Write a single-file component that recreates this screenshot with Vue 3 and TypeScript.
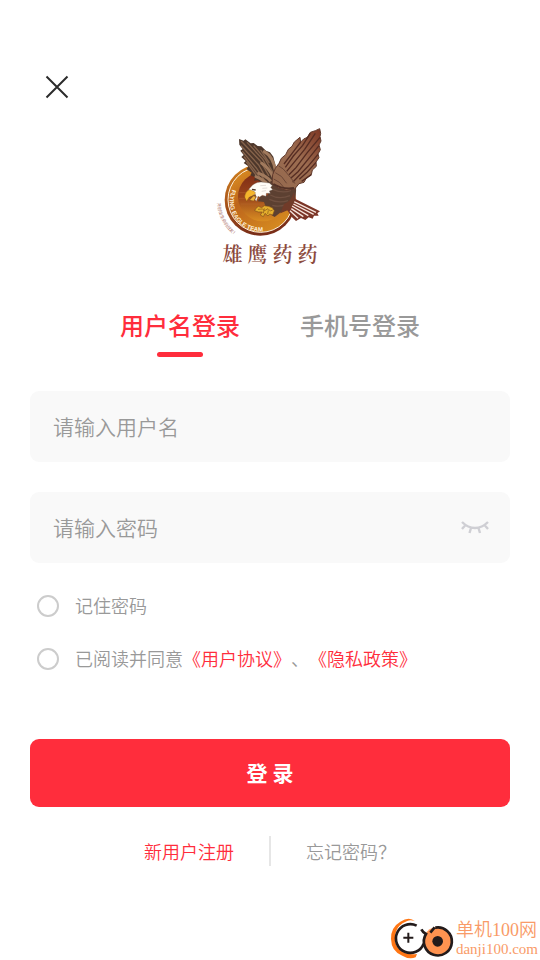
<script setup lang="ts">
import { ref } from 'vue'

type Mode = 'username' | 'phone'

const tabs: { id: Mode; label: string }[] = [
  { id: 'username', label: '用户名登录' },
  { id: 'phone', label: '手机号登录' },
]
const mode = ref<Mode>('username')
const username = ref('')
const password = ref('')
const showPassword = ref(false)
const remember = ref(false)
const agreed = ref(false)
</script>

<template>
  <main class="page">
    <header class="top">
      <button class="icon-button" type="button" aria-label="关闭">
        <svg width="24" height="24" viewBox="0 0 24 24">
          <path d="M1.500 1.500L22.500 22.500M22.500 1.500L1.500 22.500" stroke="#2b2b2b" stroke-width="2" />
        </svg>
      </button>
    </header>

    <div class="brand">
      <svg class="emblem" viewBox="0 0 360 354" role="img" aria-label="雄鹰药药">
        <defs>
          <linearGradient id="ring" x1="0" y1="0" x2="0.3" y2="1">
            <stop offset="0" stop-color="#d98a1e" />
            <stop offset="0.5" stop-color="#a9551b" />
            <stop offset="1" stop-color="#7a2e18" />
          </linearGradient>
          <linearGradient id="band" x1="0" y1="0" x2="0.7" y2="1">
            <stop offset="0" stop-color="#e39a23" />
            <stop offset="0.45" stop-color="#bd651c" />
            <stop offset="1" stop-color="#d68b20" />
          </linearGradient>
          <linearGradient id="disc" x1="0" y1="0" x2="0" y2="1">
            <stop offset="0" stop-color="#7b2a16" />
            <stop offset="0.5" stop-color="#9b451a" />
            <stop offset="1" stop-color="#d98d22" />
          </linearGradient>
          <linearGradient id="wing" x1="0" y1="1" x2="1" y2="0">
            <stop offset="0" stop-color="#94694e" />
            <stop offset="0.55" stop-color="#9c6c50" />
            <stop offset="1" stop-color="#7c3522" />
          </linearGradient>
          <path id="arc-name" d="M67 208A90 90 0 0 0 220 300" />
          <path id="arc-motto" d="M22 249A131 131 0 0 0 98 360" />
        </defs>

        <circle cx="151" cy="240" r="107" fill="url(#ring)" />
        <circle cx="152" cy="239" r="98" fill="url(#band)" stroke="#fff3df" stroke-width="3" />
        <circle cx="158" cy="230" r="74" fill="url(#disc)" />
        <path d="M88 218H210M87 235H210M92 252H205" stroke="#b96a32" stroke-width="3" opacity=".45" />
        <text class="ring-text"><textPath href="#arc-name">FLYING EAGLE TEAM</textPath></text>
        <text class="motto"><textPath href="#arc-motto">开创出生命的战友！</textPath></text>

        <!-- tail -->
        <path d="M235 232L252 235L330 274L322 280L326 287L312 287L308 296L296 292L286 300L273 294L258 303L246 292L226 262Z" fill="#7b3527" />
        <path d="M252 245L318 277M250 252L311 283M246 258L295 287M244 266L280 290M240 272L264 295" stroke="#f6e4dc" stroke-width="4" />

        <!-- far wing -->
        <path d="M87 57L101 62L106 58L122 70L131 69L143 78L154 79L168 92L180 97L190 110L196 135L204 169L186 192L158 190L143 181L132 182L135 172L121 166L125 158L110 148L115 139L101 129L107 123L94 111L101 105L91 92L98 87L88 74Z" fill="#4d372b" />
        <path d="M94 64L151 123L176 166M94 78L146 135L168 174M98 95L139 144L162 178M103 111L135 152L157 183M110 127L137 164M112 68L158 118L184 164M132 78L166 118L189 158M153 91L177 127" fill="none" stroke="#86634b" stroke-width="4" stroke-linecap="round" />
        <path d="M163 95Q190 110 197 155M155 130Q178 145 190 172M146 160Q169 168 184 185M138 170Q155 176 168 188" fill="none" stroke="#a17a5d" stroke-width="9" stroke-linecap="round" />

        <!-- body -->
        <path d="M174 188Q195 173 228 187L258 197Q260 227 250 250Q237 270 210 278L194 291L185 286L187 267L177 258L166 258L162 246L143 244L152 228L174 226Z" fill="#5c4031" />
        <path d="M188 208Q218 222 243 211M181 225Q207 240 240 227M178 238Q205 251 234 242M187 256Q207 262 228 254" fill="none" stroke="#705040" stroke-width="4" />
        <path d="M222 252Q244 245 252 216L255 241L240 268L211 280Z" fill="#713b29" />

        <!-- near wing -->
        <path d="M329 26L332 40L330 50L333 63L327 75L331 89L324 102L327 113L318 126L319 139L307 150L304 164L289 174L282 187L267 191L254 207L230 211L204 204L186 190L188 164L196 145L207 130L214 115L227 104L235 88L246 79L253 66L270 52L272 66L281 57L292 52L301 37L316 32Z" fill="url(#wing)" stroke="#60392c" stroke-width="3" stroke-linejoin="round" />
        <path d="M272 66L248 98L222 132M301 40L278 76L250 108L226 142M316 40L284 88L254 125L230 154M330 52L290 100L258 143L237 164M327 77L294 118L264 155L242 175M324 103L294 139L266 168L248 187M318 127L292 156L268 178M304 164L275 184" fill="none" stroke="#552c22" stroke-width="4" />
        <path d="M206 138Q220 144 231 160Q244 174 255 191M196 158Q216 165 230 190M191 177Q210 184 222 203" fill="none" stroke="#6c4737" stroke-width="3" />
        <path d="M190 192Q218 209 252 204" fill="none" stroke="#523126" stroke-width="6" />

        <!-- head -->
        <path d="M117 207Q130 187 153 186L178 189L187 197L182 202L188 209L178 213L181 220L169 220L168 229L157 226L149 231L144 229L139 244L128 228L114 217Z" fill="#fffdf7" stroke="#70635b" stroke-width="1" />
        <path d="M157 205L172 204M155 214L168 212M151 197L168 196" stroke="#d4cec9" stroke-width="2" />
        <path d="M118 209Q105 214 104 231L110 244L117 232L127 229L137 219L131 213Z" fill="#f5b52c" stroke="#765117" stroke-width="1" />
        <path d="M118 232L136 222L140 231L132 243L121 244Z" fill="#865022" />
        <path d="M120 240L130 229L137 230L131 242Z" fill="#efb53b" />
        <path d="M126 208L137 210" stroke="#4d372b" stroke-width="4" />

        <!-- talons -->
        <path d="M137 266L145 259L155 263L163 257L175 259L187 263L193 272L188 285L179 282L174 288L165 280L160 290L151 285L157 276L145 276L134 272Z" fill="#e5af2c" stroke="#80501b" stroke-width="2" />
        <path d="M144 268L157 267L164 272L174 266L181 273L188 270M163 265L160 280M175 271L173 282" fill="none" stroke="#805018" stroke-width="2" />
      </svg>
      <h1 class="brand-name">雄鹰药药</h1>
    </div>

    <nav class="tabs" role="tablist">
      <button
        v-for="tab in tabs"
        :key="tab.id"
        type="button"
        role="tab"
        class="tab"
        :class="{ active: mode === tab.id }"
        :aria-selected="mode === tab.id"
        @click="mode = tab.id"
      >
        {{ tab.label }}
      </button>
    </nav>

    <form class="form" @submit.prevent>
      <div class="field">
        <input v-model="username" type="text" aria-label="用户名" placeholder="请输入用户名" />
      </div>
      <div class="field">
        <input v-model="password" :type="showPassword ? 'text' : 'password'" aria-label="密码" placeholder="请输入密码" />
        <button class="icon-button" type="button" aria-label="显示密码" @click="showPassword = !showPassword">
          <svg width="30" height="16" viewBox="0 0 30 16" fill="none" stroke="#cfcfd4" stroke-width="2.400">
            <path d="M2 2Q8 8 15 8T28 2M5.500 5L2 9M11 8L9.500 13M18.500 8L20 13M24.500 5L28 9" />
          </svg>
        </button>
      </div>

      <div class="options">
        <label class="option">
          <input v-model="remember" type="checkbox" />
          <span class="option-text">记住密码</span>
        </label>
        <div class="option">
          <input id="agree" v-model="agreed" type="checkbox" />
          <span class="option-text"><label for="agree">已阅读并同意</label><a href="#terms">《用户协议》</a>、<a href="#privacy">《隐私政策》</a></span>
        </div>
      </div>

      <button class="submit" type="submit">登 录</button>
    </form>

    <div class="links">
      <a class="register" href="#register">新用户注册</a>
      <a class="forgot" href="#forgot">忘记密码？</a>
    </div>

    <footer class="credit">
      <svg width="64" height="44" viewBox="0 0 192 132" aria-hidden="true">
        <path d="M75 16Q58 0 31 17Q2 34 3 69Q4 107 37 119Q58 132 77 124L81 114Q47 119 27 99Q10 82 17 51Q23 26 50 16Q62 10 75 16Z" fill="#ff7614" />
        <path d="M80 29A43 43 0 1 0 101 83" fill="none" stroke="#231b1b" stroke-width="8" />
        <path d="M55 50V80M40 65H70" stroke="#231b1b" stroke-width="6" />
        <circle cx="143" cy="76" r="43" fill="#ff9350" />
        <path d="M136 35A42 42 0 1 1 108 54Q98 48 94 40M134 34L121 50" fill="none" stroke="#231b1b" stroke-width="8" />
        <circle cx="143" cy="76" r="16" fill="#231b1b" />
      </svg>
      <div class="credit-text">
        <span class="credit-name">单机100网</span>
        <span class="credit-url">danji100.com</span>
      </div>
    </footer>
  </main>
</template>

<style>
body {
  background: #fff;
}
</style>

<style scoped>
* {
  box-sizing: border-box;
}

.page {
  display: flex;
  flex-direction: column;
  min-height: 100vh;
  padding: 72px 30px 0;
  color: #999;
  font-family: "Noto Sans CJK SC", sans-serif;
  font-size: 18px;
  font-weight: 350;
  line-height: 26px;
  text-spacing-trim: space-all;
}

button {
  padding: 0;
  border: 0;
  background: none;
  font-family: inherit;
  cursor: pointer;
}

a {
  color: #ff2d3c;
  text-decoration: none;
}

.top {
  display: flex;
  padding-left: 12px;
}

.icon-button {
  display: grid;
  place-items: center;
  width: 30px;
  height: 30px;
}

.brand {
  display: flex;
  flex-direction: column;
  align-items: center;
  margin-top: 18px;
}

.emblem {
  width: 120px;
  height: 118px;
  overflow: visible;
}

.ring-text {
  fill: #fff3df;
  font-family: "Liberation Sans", sans-serif;
  font-size: 18px;
  font-weight: 700;
}

.motto {
  fill: #a76960;
  font-size: 13px;
  font-weight: 400;
}

.brand-name {
  margin: 2px 0 0;
  padding-left: 5px;
  color: #8c4a3d;
  font-family: "Noto Serif CJK SC", "Noto Sans CJK SC", serif;
  font-size: 20px;
  font-weight: 600;
  line-height: 28px;
  letter-spacing: 5px;
}

.tabs {
  display: flex;
  justify-content: center;
  gap: 60px;
  margin-top: 39px;
}

.tab {
  display: flex;
  flex-direction: column;
  align-items: center;
  gap: 9px;
  color: #999;
  font-size: 24px;
  font-weight: 500;
  line-height: 36px;
}

.tab::after {
  content: "";
  width: 46px;
  height: 5px;
  border-radius: 3px;
}

.tab.active {
  color: #ff2d3c;
}

.tab.active::after {
  background: #ff2d3c;
}

.form {
  display: flex;
  flex-direction: column;
  gap: 30px;
  margin-top: 34px;
}

.field {
  display: flex;
  align-items: center;
  height: 71px;
  padding: 0 20px 0 23px;
  border-radius: 9px;
  background: #f9f9f9;
}

.field input {
  flex: 1;
  min-width: 0;
  height: 100%;
  padding: 0 0 2px;
  border: 0;
  outline: 0;
  background: none;
  color: #333;
  font-family: inherit;
  font-size: 21px;
  font-weight: 350;
}

.field input::placeholder {
  color: #999;
  opacity: 1;
}

.options {
  display: flex;
  flex-direction: column;
  gap: 27px;
  padding-left: 7px;
}

.option {
  display: flex;
  align-items: center;
  gap: 16px;
}

.option input {
  appearance: none;
  flex: none;
  width: 22px;
  height: 22px;
  margin: 0;
  border: 2px solid #ccc;
  border-radius: 50%;
}

.option input:checked {
  border-color: #ff2d3c;
  background: #ff2d3c;
}

.option-text {
  padding-bottom: 2px;
  line-height: 24px;
}

.submit {
  height: 68px;
  margin-top: 37px;
  padding-bottom: 2px;
  border-radius: 9px;
  background: #ff2d3c;
  color: #fff;
  font-size: 21px;
  font-weight: 700;
}

.links {
  display: grid;
  grid-template-columns: 1fr 1fr;
  margin-top: 29px;
  padding-left: 2px;
  line-height: 30px;
}

.register {
  padding-right: 35px;
  border-right: 2px solid #e6e6e6;
  text-align: right;
}

.forgot {
  padding-left: 35px;
  color: #999;
}

.credit {
  display: flex;
  align-items: center;
  align-self: flex-end;
  gap: 2px;
  margin: auto -28px 0 0;
  color: #f99b68;
}

.credit-text {
  display: flex;
  flex-direction: column;
  font-family: "Liberation Serif", "Noto Sans CJK SC", serif;
}

.credit-name {
  font-size: 18px;
  line-height: 22px;
}

.credit-url {
  font-size: 15px;
  line-height: 16px;
}
</style>
